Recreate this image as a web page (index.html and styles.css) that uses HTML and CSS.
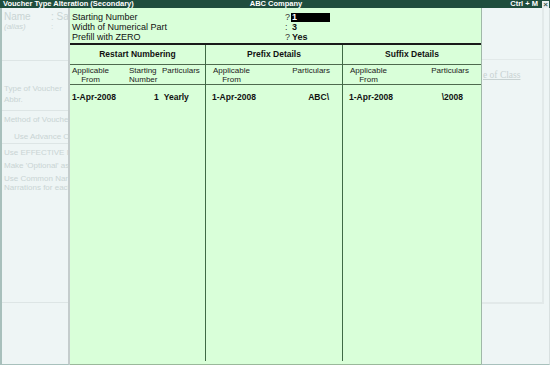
FILE: index.html
```html
<!DOCTYPE html>
<html>
<head>
    <title>Voucher Type Alteration (Secondary)</title>
    <link rel="stylesheet" href="styles.css">
</head>
<body>

<div class="titlebar">
    <span class="title">Voucher Type Alteration (Secondary)</span>
    <span class="company">ABC Company</span>
    <span class="right">
        <span class="keys">Ctrl + M</span>
        <span class="close">&times;</span>
    </span>
</div>

<div class="screen">

    <!-- faded master screen behind the sub-form -->
    <div class="back-left">
        <div class="fld fld-big"><span class="lbl">Name</span>:&nbsp;Sal</div>
        <div class="fld"><i class="lbl">(alias)</i>:</div>
        <div class="sep sep-1"></div>
        <div class="fld fld-type">Type of Voucher</div>
        <div class="fld fld-abbr">Abbr.</div>
        <div class="sep sep-2"></div>
        <div class="fld fld-method">Method of Voucher</div>
        <div class="fld fld-indent">Use Advance Co</div>
        <div class="sep sep-3"></div>
        <div class="fld fld-eff">Use EFFECTIVE D</div>
        <div class="fld fld-opt">Make 'Optional' as</div>
        <div class="fld fld-narr">Use Common Narra<br>Narrations for each</div>
        <div class="sep sep-4"></div>
    </div>

    <div class="dialog">
        <div class="settings">
            <div class="set-row">
                <span class="set-label">Starting Number</span>
                <span class="set-mark">?</span>
                <span class="set-value cursor">1</span>
            </div>
            <div class="set-row">
                <span class="set-label">Width of Numerical Part</span>
                <span class="set-mark">:</span>
                <span class="set-value">3</span>
            </div>
            <div class="set-row">
                <span class="set-label">Prefill with ZERO</span>
                <span class="set-mark">?</span>
                <span class="set-value">Yes</span>
            </div>
        </div>

        <div class="grid">
            <div class="col col-restart">
                <div class="col-head">Restart Numbering</div>
                <div class="sub-head">
                    <span class="sh-date">Applicable<br>From</span>
                    <span class="sh-start">Starting<br>Number</span>
                    <span class="sh-part">Particulars</span>
                </div>
                <div class="data">
                    <span class="d-date">1-Apr-2008</span>
                    <span class="d-start">1</span>
                    <span class="d-part">Yearly</span>
                </div>
            </div>
            <div class="col col-fix">
                <div class="col-head">Prefix Details</div>
                <div class="sub-head">
                    <span class="sh-date">Applicable<br>From</span>
                    <span class="sh-part">Particulars</span>
                </div>
                <div class="data">
                    <span class="d-date">1-Apr-2008</span>
                    <span class="d-fix">ABC\</span>
                </div>
            </div>
            <div class="col col-fix">
                <div class="col-head">Suffix Details</div>
                <div class="sub-head">
                    <span class="sh-date">Applicable<br>From</span>
                    <span class="sh-part">Particulars</span>
                </div>
                <div class="data">
                    <span class="d-date">1-Apr-2008</span>
                    <span class="d-fix d-suffix">\2008</span>
                </div>
            </div>
        </div>
    </div>

    <div class="back-right">
        <div class="box">
            <div class="box-top"></div>
            <div class="class-link">e of Class</div>
        </div>
    </div>

</div>

</body>
</html>
```

FILE: styles.css
```css
BODY {
    margin : 0;
    width : 550px;
    height : 365px;
    overflow : hidden;
    font-family : "Liberation Sans", Arial, sans-serif;
    font-size : 9px;
    background-color : #eef5f5;
}

/* title bar */
.titlebar {
    height : 8px;
    background-color : #1f4d3d;
    color : #fff;
    font-size : 7.5px;
    font-weight : bold;
    line-height : 8px;
    display : grid;
    grid-template-columns : 1fr auto 1fr;
    padding : 0 1px 0 3px;
    white-space : nowrap;
}
.titlebar .right {
    display : flex;
    justify-content : flex-end;
    align-items : center;
}
.titlebar .close {
    width : 7px;
    height : 7px;
    margin-left : 4px;
    background-color : #e8eeee;
    color : #3a5a50;
    font-size : 8px;
    line-height : 7px;
    text-align : center;
}

.screen {
    display : grid;
    grid-template-columns : 70px 411px 69px;
    height : 357px;
}

/* faded background form */
.back-left {
    border-left : 2px solid #a8c0bc;
    border-right : 2px solid #c4cccc;
    border-bottom : 1px solid #a8c0bc;
    color : #c9d4d4;
    font-size : 8px;
    overflow : hidden;
    white-space : nowrap;
    padding-top : 4px;
}
.fld {
    padding-left : 2px;
    line-height : 10px;
}
.fld .lbl {
    display : inline-block;
    width : 47px;
}
.fld-big {
    font-size : 10px;
}
.fld-type {
    margin-top : 23px;
}
.fld-abbr {
    margin-top : 1px;
}
.fld-method {
    margin-top : 4px;
}
.fld-indent {
    padding-left : 12px;
    margin-top : 7px;
}
.fld-eff {
    margin-top : 4px;
}
.fld-opt {
    margin-top : 3px;
}
.fld-narr {
    margin-top : 3px;
    line-height : 9px;
}
.sep {
    border-top : 1px solid #dde5e5;
}
.sep-1 {
    margin-top : 28px;
}
.sep-2 {
    margin-top : 5px;
}
.sep-3 {
    margin-top : 1px;
}
.sep-4 {
    margin-top : 110px;
}

.back-right {
    border-left : 1px solid #a0b8a8;
    border-right : 1px solid #d8e0e0;
    border-bottom : 1px solid #a8c0bc;
}
.box {
    width : 60px;
    height : 294px;
    border-right : 2px solid #e2e9e9;
    border-bottom : 2px solid #e2e9e9;
}
.box-top {
    height : 51px;
    border-bottom : 1px solid #e2e9e9;
}
.class-link {
    margin-top : 10px;
    padding-left : 1px;
    font-family : "Liberation Serif", serif;
    font-size : 9.5px;
    color : #c8d2d2;
    text-decoration : underline;
}

/* sub-form */
.dialog {
    background-color : #d9ffd9;
    border-bottom : 1px solid #9ab89a;
    display : flex;
    flex-direction : column;
}
.settings {
    height : 37px;
    padding : 4px 0 0 2px;
    box-sizing : border-box;
    border-bottom : 2px solid #1a1a1a;
}
.set-row {
    display : flex;
    height : 10px;
    line-height : 10px;
    color : #111;
}
.set-label {
    width : 213px;
}
.set-mark {
    width : 6px;
    color : #333;
}
.set-value {
    font-weight : bold;
    padding-left : 1px;
}
.cursor {
    background-color : #000;
    color : #fff;
    width : 38px;
    height : 9px;
    line-height : 9px;
    margin-top : 1px;
}

.grid {
    flex : 1;
    display : grid;
    grid-template-columns : 136px 137px 138px;
    padding-bottom : 3px;
}
.col {
    border-right : 1px solid #3f6a45;
    display : flex;
    flex-direction : column;
}
.col:last-child {
    border-right : none;
}
.col-head {
    height : 19px;
    line-height : 19px;
    text-align : center;
    font-weight : bold;
    font-size : 8.5px;
    border-bottom : 1px solid #4e6a4e;
    color : #111;
}
.sub-head {
    height : 20px;
    display : flex;
    border-bottom : 1px solid #4e6a4e;
    font-size : 8px;
    line-height : 9px;
    padding-top : 1px;
    box-sizing : border-box;
    color : #222;
}
.sh-date {
    text-align : center;
    width : 37px;
}
.col-restart .sh-date {
    margin-left : 2px;
}
.col-restart .sh-start {
    margin-left : 20px;
    width : 32px;
}
.col-restart .sh-part {
    margin-left : 1px;
}
.col-fix .sh-date {
    margin-left : 7px;
}
.col-fix .sh-part {
    margin-left : auto;
    padding-right : 12px;
}

.data {
    display : flex;
    font-weight : bold;
    font-size : 8.5px;
    line-height : 10px;
    padding-top : 7px;
    color : #111;
}
.col-restart .d-date {
    padding-left : 2px;
    width : 82px;
}
.col-restart .d-part {
    margin-left : 5px;
}
.col-fix .d-date {
    padding-left : 6px;
}
.col-fix .d-fix {
    margin-left : auto;
    padding-right : 13px;
}
.col-fix .d-suffix {
    padding-right : 18px;
}
```
